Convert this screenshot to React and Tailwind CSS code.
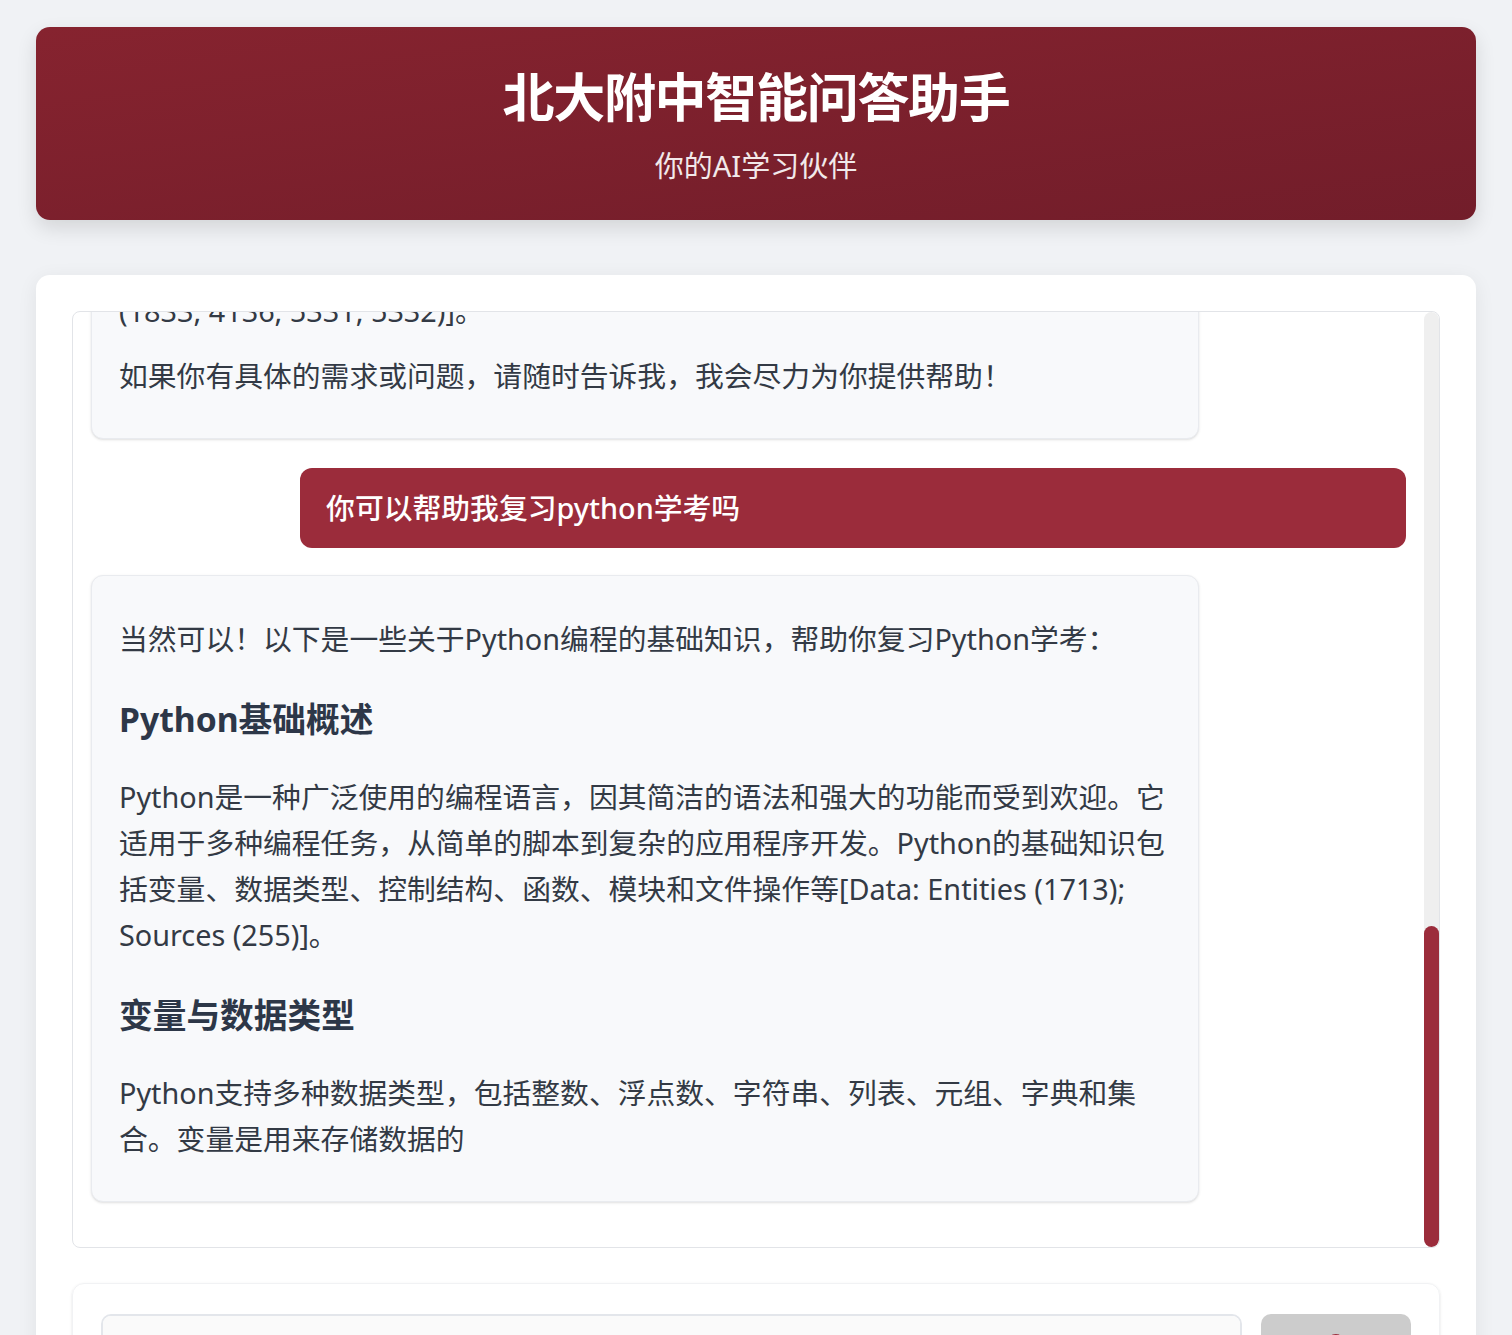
import React, { useLayoutEffect, useRef, useState } from "react";

const FONT = { fontFamily: '"Noto Sans", "Noto Sans CJK SC", sans-serif' };

const sections = [
  {
    title: "学科知识答疑",
    text: "我可以解答数学、物理、化学、生物、信息技术等学科中的问题，帮助你理解课堂上的重点和难点，并通过例题讲解相关的解题方法和思路，让你更加扎实地掌握所学知识[Data: Entities (215, 876, 903); Sources (1021, 1187)]。",
  },
  {
    title: "考试复习规划",
    text: "针对期中考试、期末考试以及学业水平考试，我可以帮助你梳理各学科的知识框架，总结常见题型和易错点，并根据你的时间安排制定合理的复习计划，提高复习效率[Data: Sources (342, 1187, 2210)]。",
  },
  {
    title: "编程与信息技术",
    text: "如果你正在学习Python等编程语言，我可以为你讲解基础语法、数据结构和常用算法，帮助你分析和调试代码中的错误，并推荐适合练习的题目和项目[Data: Entities (1713, 1720); Sources (255, 398)]。",
  },
  {
    title: "课程与选课信息",
    text: "我可以介绍北大附中的课程体系、书院制度和走班选课安排，帮助你了解不同课程的内容和要求，从而根据自己的兴趣和发展方向做出合适的选择[Data: Entities (2044, 2051); Relationships (3310)]。",
  },
  {
    title: "校园生活与活动",
    text: "关于社团活动、学生组织、校园节日和各类比赛，我可以为你提供相关的信息和参与建议，帮助你丰富课余生活，在实践中锻炼自己的能力[Data: Entities (2630, 2688); Sources (4012)]。",
  },
];

const P = ({ children }) => <p className="my-[19px]">{children}</p>;
const H3 = ({ children }) => (
  <h3 className="mt-[31px] mb-[27px] text-[33.7px] leading-[1.6] font-bold text-[#2d3748]">{children}</h3>
);

const BotBubble = ({ children }) => (
  <div className="w-[84.25%] self-start bg-[#f8f9fb] border border-[#e9ebef] rounded-xl shadow-sm px-[27px] pt-[21px] pb-[20px] text-[28.8px] leading-[1.6] text-[#333a45]">
    {children}
  </div>
);

const UserBubble = ({ children }) => (
  <div className="w-[84.1%] self-end mt-[2px] bg-[#9b2c3b] rounded-xl px-[26px] py-[17px] text-[28.8px] leading-[1.6] text-white font-medium">
    {children}
  </div>
);

export default function App() {
  const chatRef = useRef(null);
  const [thumb, setThumb] = useState({ top: 0, height: 0 });

  const updateThumb = () => {
    const el = chatRef.current;
    if (!el) return;
    const h = el.clientHeight;
    setThumb({
      top: (el.scrollTop / el.scrollHeight) * h,
      height: (h / el.scrollHeight) * h,
    });
  };

  useLayoutEffect(() => {
    if (chatRef.current) chatRef.current.scrollTop = chatRef.current.scrollHeight;
    updateThumb();
  }, []);

  return (
    <div className="min-h-screen bg-[#f0f2f5] px-[36px] pt-[27px] pb-10" style={FONT}>
      <header className="rounded-[14px] bg-linear-to-br from-[#86232f] to-[#721d2a] shadow-[0_8px_20px_rgba(0,0,0,0.12)] h-[193px] flex flex-col items-center justify-center text-white">
        <h1 className="text-[52px] leading-tight font-bold tracking-tight mt-[4px]">北大附中智能问答助手</h1>
        <p className="text-[29px] mt-[15px] opacity-90">你的AI学习伙伴</p>
      </header>

      <main className="mt-[55px] bg-white rounded-[14px] shadow-[0_4px_20px_rgba(0,0,0,0.07)] p-[36px]">
        <div className="relative h-[937px] border border-[#e2e4e8] rounded-lg overflow-hidden">
          <div
            ref={chatRef}
            onScroll={updateThumb}
            className="h-full overflow-y-auto flex flex-col gap-[27px] pl-[18px] pr-[33px] pt-[18px] pb-[45px] [scrollbar-width:none]"
          >
            <UserBubble>你好，请介绍一下你自己</UserBubble>
            <BotBubble>
              <P>
                你好！我是北大附中智能问答助手，可以帮助你解答学习和校园生活中的各种问题。以下是我能够为你提供的一些帮助：
              </P>
              {sections.map((s) => (
                <React.Fragment key={s.title}>
                  <H3>{s.title}</H3>
                  <P>{s.text}</P>
                </React.Fragment>
              ))}
              <H3>学习方法建议</H3>
              <P>
                我还可以分享时间管理、笔记整理和错题复盘等方面的学习方法，帮助你养成良好的学习习惯，找到适合自己的学习节奏[Data: Relationships (4420, 4431); Sources
                <br />
                (1833, 4136, 5331, 5332)]。
              </P>
              <P>如果你有具体的需求或问题，请随时告诉我，我会尽力为你提供帮助！</P>
            </BotBubble>

            <UserBubble>你可以帮助我复习python学考吗</UserBubble>

            <BotBubble>
              <P>当然可以！以下是一些关于Python编程的基础知识，帮助你复习Python学考：</P>
              <H3>Python基础概述</H3>
              <P>
                Python是一种广泛使用的编程语言，因其简洁的语法和强大的功能而受到欢迎。它适用于多种编程任务，从简单的脚本到复杂的应用程序开发。Python的基础知识包括变量、数据类型、控制结构、函数、模块和文件操作等[Data: Entities (1713); Sources (255)]。
              </P>
              <H3>变量与数据类型</H3>
              <P>Python支持多种数据类型，包括整数、浮点数、字符串、列表、元组、字典和集合。变量是用来存储数据的</P>
            </BotBubble>
          </div>

          {/* custom scrollbar */}
          <div className="absolute top-0 right-0 bottom-0 w-[15px] bg-[#efefef] rounded-lg">
            <div
              className="absolute left-0 right-0 bg-[#9b2c3b] rounded-full"
              style={{ top: thumb.top, height: thumb.height }}
            />
          </div>
        </div>

        <div className="mt-[35px] border border-[#f1f2f4] rounded-xl shadow-sm px-[28px] pt-[30px] pb-[28px] flex gap-[19px]">
          <textarea
            rows={1}
            placeholder="请输入你的问题..."
            className="flex-1 h-[64px] resize-none bg-[#fafafa] border-2 border-[#e3e6eb] rounded-[10px] px-[20px] py-[14px] text-[26px] outline-none placeholder:text-[#9ca3af]"
          />
          <button className="w-[150px] h-[64px] bg-[#cccccc] rounded-[10px] flex items-start justify-center pt-[20px]">
            <span className="w-[26px] h-[26px] rounded-full border-[3px] border-[#e8b6bd] border-t-[#9b2c3b] rotate-[-30deg]" />
          </button>
        </div>
      </main>
    </div>
  );
}
